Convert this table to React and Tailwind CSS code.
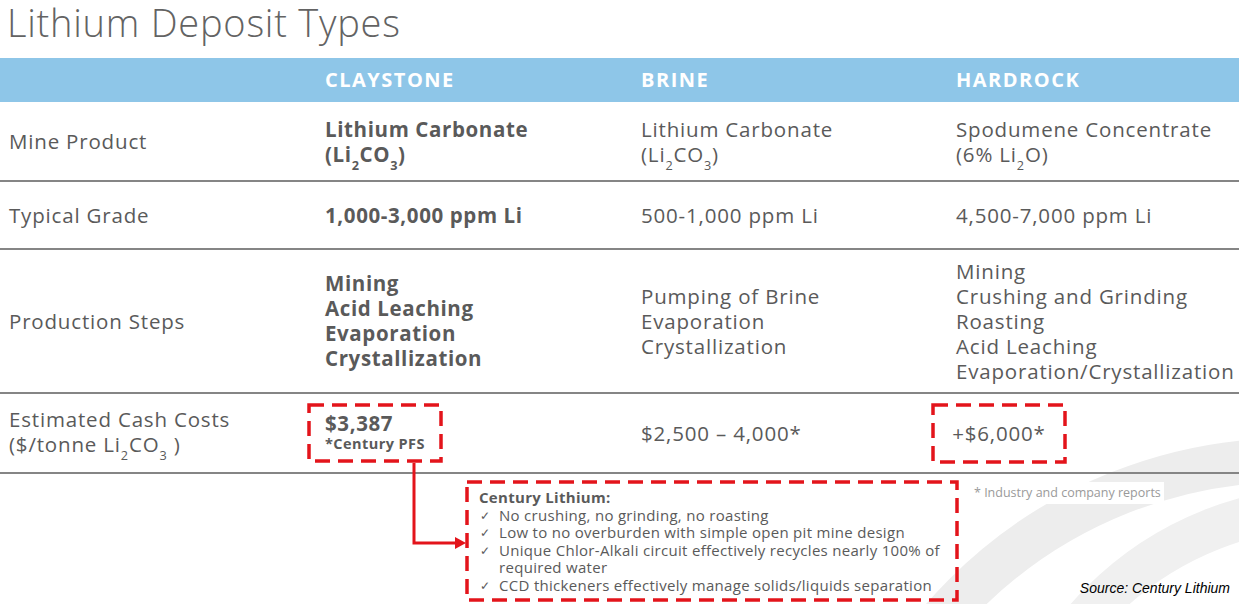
import React from "react";

const ink = "text-[#5a5a5a]";

function Chem({ children }) {
  return <sub className="text-[0.62em] align-[-0.35em] leading-none">{children}</sub>;
}

function Dashed({ className = "", children }) {
  return (
    <div className={`relative ${className}`}>
      <svg className="absolute inset-0 w-full h-full overflow-visible pointer-events-none">
        <rect
          x="0"
          y="0"
          width="100%"
          height="100%"
          fill="none"
          stroke="#e3141b"
          strokeWidth="3.5"
          strokeDasharray="15 8"
        />
      </svg>
      {children}
    </div>
  );
}

function Row({ h, label, c1, c2, c3 }) {
  return (
    <div className={`grid grid-cols-[325px_316px_315px_1fr] items-center border-b-2 border-[#858585] ${h}`}>
      <div className="pl-[9px]">{label}</div>
      <div>{c1}</div>
      <div>{c2}</div>
      <div>{c3}</div>
    </div>
  );
}

export default function App() {
  const checks = [
    "No crushing, no grinding, no roasting",
    "Low to no overburden with simple open pit mine design",
    "Unique Chlor-Alkali circuit effectively recycles nearly 100% of required water",
    "CCD thickeners effectively manage solids/liquids separation",
  ];

  return (
    <div className={`relative w-[1239px] h-[604px] overflow-hidden bg-white font-['Open_Sans',sans-serif] ${ink}`}>
      {/* background rings */}
      <svg className="absolute inset-0 w-[1239px] h-[604px] pointer-events-none">
        <circle cx="1290" cy="920" r="460" fill="none" stroke="#ededed" strokeWidth="44" />
        <circle cx="1330" cy="830" r="323" fill="none" stroke="#f0f0f0" strokeWidth="42" />
      </svg>

      {/* Title */}
      <div className="relative h-[58px] pl-[7px] text-[38px] leading-[44px] font-light tracking-[0.02em] text-[#636363]">
        Lithium Deposit Types
      </div>

      {/* Header band */}
      <div className="relative grid grid-cols-[325px_316px_315px_1fr] items-center h-[44px] bg-[#8ec6e8] text-white font-bold text-[20px] tracking-[0.075em]">
        <div />
        <div>CLAYSTONE</div>
        <div>BRINE</div>
        <div>HARDROCK</div>
      </div>

      <div className="relative text-[20.5px] leading-[25px] tracking-[0.04em]">
        <Row
          h="h-[80px]"
          label="Mine Product"
          c1={
            <div className="font-bold tracking-[0.03em] pt-[3px]">
              Lithium Carbonate
              <br />
              (Li<Chem>2</Chem>CO<Chem>3</Chem>)
            </div>
          }
          c2={
            <div className="pt-[3px]">
              Lithium Carbonate
              <br />
              (Li<Chem>2</Chem>CO<Chem>3</Chem>)
            </div>
          }
          c3={
            <div className="pt-[3px]">
              Spodumene Concentrate
              <br />
              (6% Li<Chem>2</Chem>O)
            </div>
          }
        />
        <Row
          h="h-[68px]"
          label="Typical Grade"
          c1={<div className="font-bold tracking-[0.03em]">1,000-3,000 ppm Li</div>}
          c2="500-1,000 ppm Li"
          c3="4,500-7,000 ppm Li"
        />
        <Row
          h="h-[144px]"
          label="Production Steps"
          c1={
            <div className="font-bold tracking-[0.03em]">
              Mining
              <br />
              Acid Leaching
              <br />
              Evaporation
              <br />
              Crystallization
            </div>
          }
          c2={
            <div>
              Pumping of Brine
              <br />
              Evaporation
              <br />
              Crystallization
            </div>
          }
          c3={
            <div>
              Mining
              <br />
              Crushing and Grinding
              <br />
              Roasting
              <br />
              Acid Leaching
              <br />
              Evaporation/Crystallization
            </div>
          }
        />
        <Row
          h="h-[80px]"
          label={
            <div className="leading-[25px]">
              Estimated Cash Costs
              <br />
              ($/tonne Li<Chem>2</Chem>CO<Chem>3</Chem> )
            </div>
          }
          c1={
            <Dashed className="-ml-[16px] w-[132px] h-[56px] pl-[16px] pt-[6px]">
              <div className="font-bold text-[20.5px] leading-[24px] tracking-[0.03em]">$3,387</div>
              <div className="font-bold text-[14.5px] leading-[18px] tracking-[0.03em]">*Century PFS</div>
            </Dashed>
          }
          c2="$2,500 – 4,000*"
          c3={
            <Dashed className="-ml-[23px] w-[132px] h-[57px] flex items-center justify-center">
              +$6,000*
            </Dashed>
          }
        />
      </div>

      {/* Bottom section */}
      <div className="relative flex pt-[8px]">
        <div className="w-[467px] shrink-0" />
        <Dashed className="w-[490px] h-[118px] pl-[12px] pt-[7px] text-[15px] leading-[17.6px] tracking-[0.02em]">
          <div className="font-bold">Century Lithium:</div>
          <ul>
            {checks.map((c) => (
              <li key={c} className="flex">
                <span className="w-[20px] shrink-0 pl-[1px] text-[12px]">✓</span>
                <span className="pr-[10px]">{c}</span>
              </li>
            ))}
          </ul>
        </Dashed>
        <div className="flex-1 flex flex-col justify-between pb-[1px]">
          <div className="ml-[14px] w-fit bg-white px-[3px] text-[12.5px] leading-[22px] text-[#9a9a9a]">
            * Industry and company reports
          </div>
          <div className="self-end pr-[9px] font-['Liberation_Sans',sans-serif] italic text-[14px] text-black">
            Source: Century Lithium
          </div>
        </div>
      </div>

      {/* connector arrow */}
      <svg className="absolute left-0 top-0 w-[1239px] h-[604px] pointer-events-none">
        <polyline points="414,463 414,543 458,543" fill="none" stroke="#e3141b" strokeWidth="3" />
        <polygon points="466,543 455,537 455,549" fill="#e3141b" />
      </svg>
    </div>
  );
}
